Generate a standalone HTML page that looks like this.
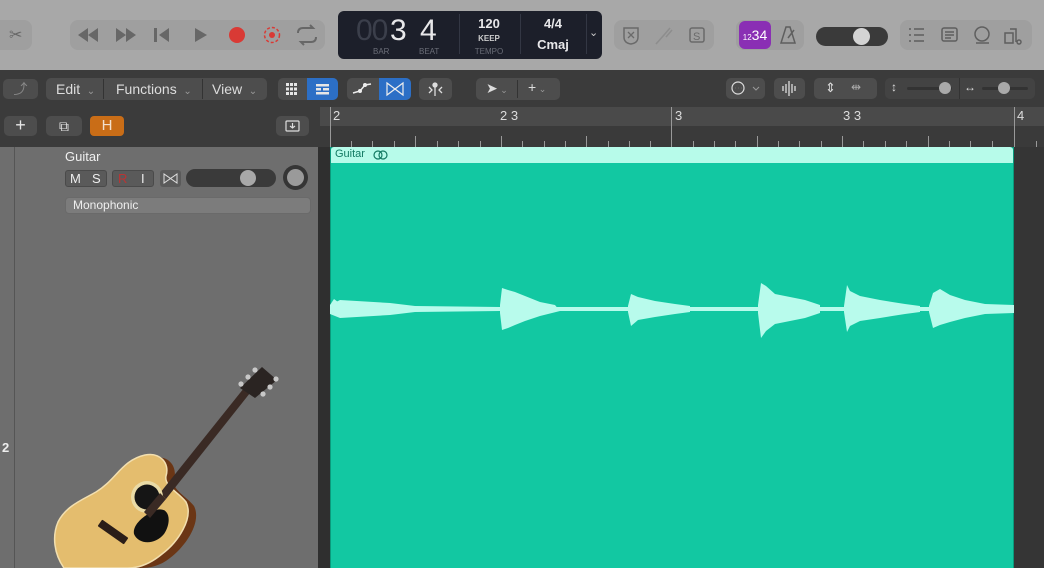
<!DOCTYPE html>
<html><head><meta charset="utf-8"><style>
*{margin:0;padding:0;box-sizing:border-box}
body{width:1044px;height:568px;overflow:hidden;background:#6e6e6e;font-family:"Liberation Sans",sans-serif;position:relative}
.a{position:absolute}
.grp{position:absolute;background:#9f9f9f;border-radius:8px}
.tb{position:absolute;background:#4d4d4d;border-radius:5px;color:#e6e6e6;font-size:14px}
.w{color:#ddd}
</style></head><body>
<div class="a" style="left:0;top:0;width:1044px;height:70px;background:#a8a8a8"></div>
<div class="grp" style="left:-8px;top:20px;width:40px;height:30px"></div>
<div class="a" style="left:9px;top:25px;font-size:16px;color:#666">✂</div>
<div class="grp" style="left:70px;top:20px;width:255px;height:30px"></div>
<svg class="a" style="left:70px;top:20px" width="255" height="30">
<g fill="#676767"><path d="M8 15 L18 8 V22Z M18 15 L28 8 V22Z"/><path d="M46 8 L56 15 L46 22Z M56 8 L66 15 L56 22Z"/><rect x="84" y="8" width="3" height="14"/><path d="M99 8 L89 15 L99 22Z"/><path d="M125 8 L137 15 L125 22Z"/></g>
<circle cx="167" cy="15" r="8" fill="#d93a35"/>
<circle cx="202" cy="15" r="7.5" fill="none" stroke="#d93a35" stroke-width="1.5" stroke-dasharray="3 2"/><circle cx="202" cy="15" r="3" fill="#d93a35"/>
<path d="M228 13 q0-5 5-5 h10 l-3-3 M246 17 q0 5-5 5 h-10 l3 3" fill="none" stroke="#676767" stroke-width="2"/>
</svg>
<div class="a" style="left:338px;top:11px;width:264px;height:48px;background:#1c1f2a;border-radius:6px"></div>
<div class="a" style="left:356px;top:14px;font-size:30px;color:#3b3f4b;letter-spacing:-1px">00</div>
<div class="a" style="left:390px;top:14px;font-size:30px;color:#e8e8ea">3</div>
<div class="a" style="left:420px;top:14px;font-size:30px;color:#e8e8ea">4</div>
<div class="a" style="left:373px;top:47px;font-size:8px;color:#6a6d77">BAR</div>
<div class="a" style="left:419px;top:47px;font-size:8px;color:#6a6d77">BEAT</div>
<div class="a" style="left:459px;top:14px;width:1px;height:40px;background:#333744"></div>
<div class="a" style="left:466px;top:16px;width:46px;text-align:center;font-size:13px;color:#e8e8ea;font-weight:bold">120</div>
<div class="a" style="left:466px;top:34px;width:46px;text-align:center;font-size:8px;color:#ccc;font-weight:bold">KEEP</div>
<div class="a" style="left:466px;top:47px;width:46px;text-align:center;font-size:8px;color:#6a6d77">TEMPO</div>
<div class="a" style="left:520px;top:14px;width:1px;height:40px;background:#333744"></div>
<div class="a" style="left:530px;top:16px;width:46px;text-align:center;font-size:13px;color:#e8e8ea;font-weight:bold">4/4</div>
<div class="a" style="left:530px;top:37px;width:46px;text-align:center;font-size:13px;color:#e8e8ea;font-weight:bold">Cmaj</div>
<div class="a" style="left:586px;top:14px;width:1px;height:40px;background:#333744"></div>
<div class="a" style="left:589px;top:26px;font-size:11px;color:#ccc">⌄</div>
<div class="grp" style="left:614px;top:20px;width:100px;height:30px"></div>
<svg class="a" style="left:614px;top:20px" width="100" height="30"><path d="M10 8 h14 v9 q0 6-7 7 q-7-1-7-7z" fill="none" stroke="#6a6a6a" stroke-width="1.5"/><path d="M14 12 l6 6 M20 12 l-6 6" stroke="#6a6a6a" stroke-width="1.3"/><path d="M42 24 l8-9 M50 15 l6-7 M52 17 l6-7" stroke="#8d8d8d" stroke-width="1.5"/><rect x="76" y="8" width="14" height="14" rx="2" fill="none" stroke="#6a6a6a" stroke-width="1.5"/><text x="79" y="20" font-size="11" fill="#6a6a6a" font-family="Liberation Sans">S</text></svg>
<div class="grp" style="left:736px;top:20px;width:68px;height:30px"></div>
<div class="a" style="left:739px;top:21px;width:32px;height:28px;background:#8a2fb4;border-radius:6px;color:#fff;font-size:14px;text-align:center;line-height:28px"><span style="font-size:8px">12</span>34</div>
<svg class="a" style="left:778px;top:24px" width="20" height="22"><path d="M3 19 L8 3 h4 L17 19z M10 14 L16 6" fill="none" stroke="#5f5f5f" stroke-width="1.5"/></svg>
<div class="a" style="left:816px;top:27px;width:72px;height:19px;background:#3a3a3a;border-radius:10px"></div>
<div class="a" style="left:853px;top:28px;width:17px;height:17px;background:#d3d3d3;border-radius:50%"></div>
<div class="grp" style="left:900px;top:20px;width:132px;height:30px"></div>
<svg class="a" style="left:900px;top:20px" width="132" height="30" fill="none" stroke="#5f5f5f" stroke-width="1.5"><path d="M9 9h2M9 15h2M9 21h2M14 9h10M14 15h10M14 21h10"/><rect x="42" y="8" width="15" height="13" rx="2"/><path d="M45 12h9M45 15h9M45 18h6"/><circle cx="82" cy="14" r="7"/><path d="M76 23h13"/><path d="M105 13h8v10h-8z M110 9h6v6 M116 12v10"/><circle cx="119" cy="22" r="2"/></svg>
<div class="a" style="left:0;top:70px;width:1044px;height:37px;background:#3b3b3b"></div>
<div class="tb" style="left:3px;top:79px;width:35px;height:20px;color:#888;text-align:center">⤴</div>
<div class="tb" style="left:46px;top:78px;width:221px;height:22px"></div>
<div class="a w" style="left:56px;top:81px;font-size:14px">Edit <span style="font-size:10px;color:#999">&nbsp;⌄</span></div>
<div class="a" style="left:103px;top:79px;width:1px;height:20px;background:#333"></div>
<div class="a w" style="left:116px;top:81px;font-size:14px">Functions <span style="font-size:10px;color:#999">&nbsp;⌄</span></div>
<div class="a" style="left:202px;top:79px;width:1px;height:20px;background:#333"></div>
<div class="a w" style="left:212px;top:81px;font-size:14px">View <span style="font-size:10px;color:#999">&nbsp;⌄</span></div>
<div class="tb" style="left:278px;top:78px;width:60px;height:22px"></div>
<div class="a" style="left:307px;top:78px;width:31px;height:22px;background:#2c6fc6;border-radius:0 5px 5px 0"></div>
<svg class="a" style="left:278px;top:78px" width="60" height="22" fill="#e6e6e6"><rect x="8" y="5" width="3" height="3"/><rect x="12" y="5" width="3" height="3"/><rect x="16" y="5" width="3" height="3"/><rect x="8" y="9.5" width="3" height="3"/><rect x="12" y="9.5" width="3" height="3"/><rect x="16" y="9.5" width="3" height="3"/><rect x="8" y="14" width="3" height="3"/><rect x="12" y="14" width="3" height="3"/><rect x="16" y="14" width="3" height="3"/><rect x="38" y="6" width="13" height="2.5"/><rect x="38" y="10" width="5" height="2.5"/><rect x="45" y="10" width="6" height="2.5"/><rect x="38" y="14" width="13" height="2.5"/></svg>
<div class="tb" style="left:347px;top:78px;width:64px;height:22px"></div>
<div class="a" style="left:379px;top:78px;width:32px;height:22px;background:#2c6fc6;border-radius:0 5px 5px 0"></div>
<svg class="a" style="left:347px;top:78px" width="64" height="22"><path d="M6 15 l7-2 l5-6 l6-1" stroke="#eee" stroke-width="1.5" fill="none"/><circle cx="13" cy="13" r="2" fill="#eee"/><circle cx="18" cy="7" r="2" fill="#eee"/><path d="M40 5 v12 l16-12 v12z" stroke="#eee" stroke-width="1.2" fill="none"/></svg>
<div class="tb" style="left:419px;top:78px;width:33px;height:22px"></div>
<svg class="a" style="left:419px;top:78px" width="33" height="22" stroke="#ddd" stroke-width="1.3" fill="none"><path d="M16 5v13 M10 9l3 3-3 3 M23 9l-3 3 3 3"/><circle cx="16" cy="7" r="2" fill="#ddd"/></svg>
<div class="tb" style="left:476px;top:78px;width:84px;height:22px"></div>
<div class="a" style="left:517px;top:80px;width:1px;height:18px;background:#333"></div>
<div class="a w" style="left:486px;top:80px;font-size:14px">➤<span style="font-size:9px;color:#999"> ⌄</span></div>
<div class="a w" style="left:528px;top:79px;font-size:14px">+<span style="font-size:9px;color:#999"> ⌄</span></div>
<div class="tb" style="left:726px;top:78px;width:39px;height:21px"></div>
<svg class="a" style="left:726px;top:78px" width="39" height="21"><circle cx="12" cy="10" r="6" stroke="#ddd" fill="none" stroke-width="1.2"/><path d="M9 10h.1M12 10h.1M15 10h.1" stroke="#ddd" stroke-width="2"/><path d="M27 9l3 3 3-3" stroke="#999" fill="none"/></svg>
<div class="tb" style="left:774px;top:78px;width:31px;height:21px"></div>
<svg class="a" style="left:774px;top:78px" width="31" height="21" stroke="#ddd" stroke-width="1.3"><path d="M9 8v5M12 6v9M15 3v15M18 6v9M21 8v5"/></svg>
<div class="tb" style="left:814px;top:78px;width:63px;height:21px"></div>
<div class="a w" style="left:825px;top:80px;font-size:13px">⇕</div><div class="a" style="left:851px;top:80px;font-size:12px;color:#aaa">⇹</div>
<div class="a" style="left:885px;top:78px;width:150px;height:21px;background:#434343;border-radius:5px"></div>
<div class="a w" style="left:891px;top:80px;font-size:12px">↕</div>
<div class="a" style="left:907px;top:87px;width:45px;height:3px;background:#333;border-radius:2px"></div>
<div class="a" style="left:939px;top:82px;width:12px;height:12px;background:#aaa;border-radius:50%"></div>
<div class="a" style="left:959px;top:78px;width:1px;height:21px;background:#333"></div>
<div class="a w" style="left:964px;top:80px;font-size:12px">↔</div>
<div class="a" style="left:982px;top:87px;width:46px;height:3px;background:#333;border-radius:2px"></div>
<div class="a" style="left:998px;top:82px;width:12px;height:12px;background:#aaa;border-radius:50%"></div>
<div class="a" style="left:0;top:107px;width:320px;height:40px;background:#3b3b3b"></div>
<div class="tb" style="left:4px;top:116px;width:33px;height:20px;text-align:center;font-size:18px;line-height:19px">+</div>
<div class="tb" style="left:46px;top:116px;width:36px;height:20px;text-align:center;line-height:20px">⧉</div>
<div class="a" style="left:90px;top:116px;width:34px;height:20px;background:#c96d17;border-radius:4px;color:#f3e0cc;text-align:center;font-size:15px;line-height:20px">H</div>
<div class="tb" style="left:276px;top:116px;width:33px;height:20px"></div>
<svg class="a" style="left:276px;top:116px" width="33" height="20" fill="none" stroke="#ddd" stroke-width="1.2"><rect x="10" y="5" width="13" height="10" rx="1"/><path d="M16.5 7v5M14 10l2.5 2 2.5-2"/></svg>
<div class="a" style="left:320px;top:107px;width:724px;height:19px;background:#4a4a4a"></div>
<div class="a" style="left:320px;top:126px;width:724px;height:21px;background:#3a3a3a"></div>
<svg class="a" style="left:320px;top:107px" width="724" height="40">
<g stroke="#999" stroke-width="1">
<path d="M10.5 0v40M351.5 0v40M694.5 0v40"/>
<path d="M31.5 34v6M52.5 34v6M74.5 34v6M95.5 29v11M117.5 34v6M138.5 34v6M160.5 34v6M181.5 29v11M202.5 34v6M224.5 34v6M245.5 34v6M266.5 29v11M288.5 34v6M309.5 34v6M330.5 34v6M373.5 34v6M394.5 34v6M415.5 34v6M437.5 29v11M458.5 34v6M479.5 34v6M501.5 34v6M522.5 29v11M543.5 34v6M565.5 34v6M586.5 34v6M608.5 29v11M629.5 34v6M650.5 34v6M672.5 34v6M716.5 34v6"/>
</g>
<g fill="#ddd" font-size="13" font-family="Liberation Sans"><text x="13" y="13">2</text><text x="180" y="13">2 3</text><text x="355" y="13">3</text><text x="523" y="13">3 3</text><text x="697" y="13">4</text></g>
</svg>
<div class="a" style="left:14px;top:147px;width:1px;height:421px;background:#555"></div>
<div class="a" style="left:318px;top:147px;width:12px;height:421px;background:#2f2f2f"></div>
<div class="a" style="left:1014px;top:147px;width:30px;height:421px;background:#353535"></div>
<div class="a" style="left:65px;top:149px;font-size:13px;color:#f0f0f0">Guitar</div>
<div class="a" style="left:65px;top:170px;width:42px;height:17px;background:#5a5a5a;border-radius:3px;border:1px solid #4a4a4a"></div>
<div class="a" style="left:70px;top:171px;font-size:13px;color:#eee">M</div><div class="a" style="left:92px;top:171px;font-size:13px;color:#eee">S</div>
<div class="a" style="left:112px;top:170px;width:42px;height:17px;background:#5a5a5a;border-radius:3px;border:1px solid #4a4a4a"></div>
<div class="a" style="left:118px;top:171px;font-size:13px;color:#b33">R</div><div class="a" style="left:141px;top:171px;font-size:13px;color:#eee">I</div>
<div class="a" style="left:160px;top:170px;width:21px;height:17px;background:#5a5a5a;border-radius:3px"></div>
<svg class="a" style="left:160px;top:170px" width="21" height="17"><path d="M4 4v9l13-9v9z" stroke="#ddd" fill="none"/></svg>
<div class="a" style="left:186px;top:169px;width:90px;height:18px;background:#3a3a3a;border-radius:9px"></div>
<div class="a" style="left:240px;top:170px;width:16px;height:16px;background:#a8a8a8;border-radius:50%"></div>
<div class="a" style="left:283px;top:165px;width:25px;height:25px;background:#353535;border-radius:50%"></div>
<div class="a" style="left:287px;top:169px;width:17px;height:17px;background:#9a9a9a;border-radius:50%"></div>
<div class="a" style="left:65px;top:197px;width:246px;height:17px;background:#7c7c7c;border-radius:4px;border:1px solid #6a6a6a;font-size:12px;color:#eee;padding-left:7px;line-height:15px">Monophonic</div>
<div class="a" style="left:2px;top:440px;font-size:13px;color:#eee;font-weight:bold">2</div>
<!-- guitar -->
<svg class="a" style="left:0;top:350px" width="318" height="218">
<path d="M152 108 C168 104 178 116 174 130 C172 140 186 146 194 156 C202 172 186 196 170 208 C160 216 150 218 140 218 L66 218 C58 206 56 190 62 176 C70 160 88 152 102 144 C122 132 130 112 152 108 Z" fill="#6b3615"/>
<path d="M145 105 C160 102 170 113 166 126 C164 136 178 142 186 152 C194 168 178 192 162 204 C150 214 138 218 128 218 L64 218 C54 204 52 186 58 172 C66 156 82 150 96 142 C116 130 122 110 145 105 Z" fill="#e4bd6e" stroke="#f2dfb0" stroke-width="1.5"/>
<path d="M160 143 L166 149 L250 43 L244 38 Z" fill="#3a2a24"/>
<path d="M240 38 L262 17 L277 30 L255 48 Z" fill="#2a2422"/>
<g fill="#c8c8c8"><circle cx="241" cy="34" r="2.6"/><circle cx="248" cy="27" r="2.6"/><circle cx="255" cy="20" r="2.6"/><circle cx="263" cy="44" r="2.6"/><circle cx="270" cy="37" r="2.6"/><circle cx="276" cy="29" r="2.6"/></g>
<circle cx="147" cy="147" r="16" fill="#eadba6"/><circle cx="147" cy="147" r="12.5" fill="#151515"/>
<path d="M156 160 C170 156 172 172 164 184 C154 196 138 194 134 184 C132 174 146 164 156 160Z" fill="#111"/>
<path d="M160 143 L166 149 L150 168 L144 162 Z" fill="#3a2a24"/>
<g transform="translate(113,182) rotate(35)"><rect x="-16" y="-4" width="32" height="8" rx="1" fill="#2a1d18"/></g>
</svg>
<div class="a" style="left:330px;top:147px;width:684px;height:421px;background:#12c8a2;border:1px solid #0a9a7c;border-bottom:none"></div>
<div class="a" style="left:331px;top:147px;width:682px;height:16px;background:#b7fbea;border-radius:3px 3px 0 0"></div>
<div class="a" style="left:335px;top:148px;font-size:11px;color:#137a63">Guitar</div>
<svg class="a" style="left:373px;top:150px" width="16" height="10"><circle cx="5" cy="5" r="4" fill="none" stroke="#137a63" stroke-width="1.2"/><circle cx="10" cy="5" r="4" fill="none" stroke="#137a63" stroke-width="1.2"/></svg>
<svg class="a" style="left:330px;top:270px" width="684" height="80" fill="#b8fbec">
<path d="M0 35 L10 30 L60 33 L85 36 L170 37 L684 37 L684 41 L170 41 L85 42 L60 45 L10 48 L0 44Z"/>
<path d="M0 43 L0 35 L4 29 L8 32 L0 44Z"/>
<path d="M170 35 L172 18 L178 20 L185 22 L195 26 L210 32 L225 35 L230 41 L210 46 L195 51 L185 55 L178 58 L172 60 L170 43Z"/>
<path d="M298 36 L301 24 L308 27 L325 31 L345 34 L360 36 L360 42 L345 44 L325 47 L308 50 L301 56 L298 42Z"/>
<path d="M428 35 L431 13 L436 16 L445 24 L460 27 L475 30 L490 35 L490 43 L475 48 L460 51 L445 54 L436 61 L431 68 L428 43Z"/>
<path d="M514 36 L517 15 L520 21 L530 26 L550 30 L575 34 L590 36 L590 42 L575 44 L550 48 L530 51 L520 56 L517 62 L514 42Z"/>
<path d="M599 36 L603 23 L610 19 L620 25 L635 30 L655 34 L684 35 L684 43 L655 44 L635 48 L620 52 L610 55 L603 58 L599 42Z"/>
</svg>
</body></html>
